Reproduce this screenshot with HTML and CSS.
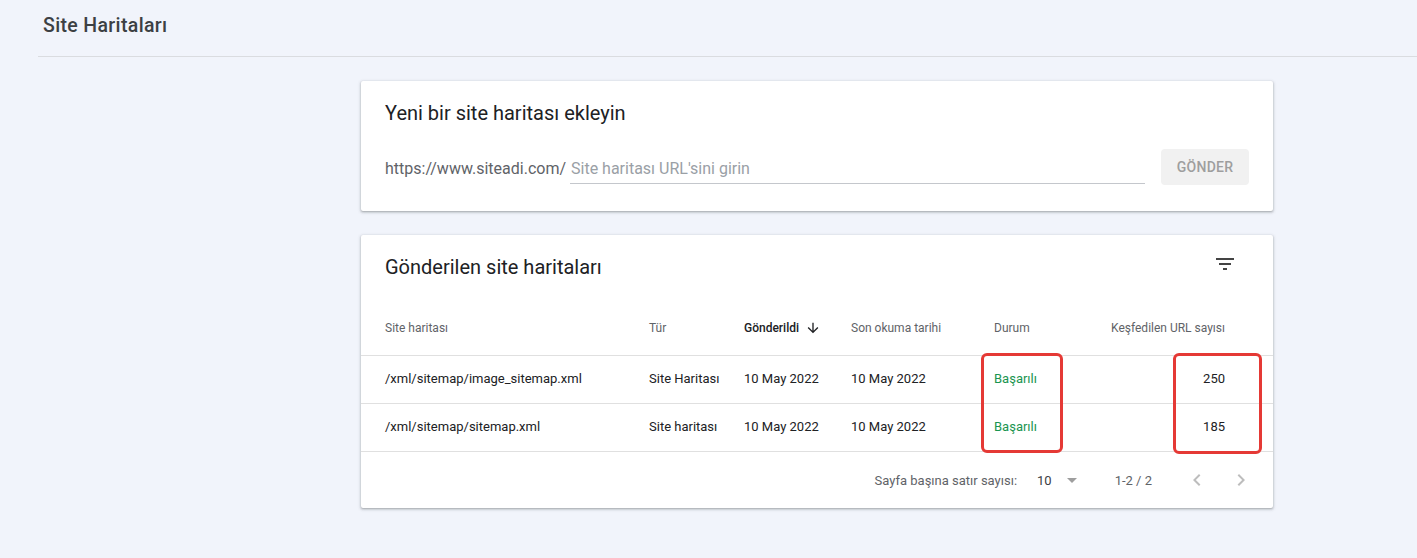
FILE: index.html
```html
<!DOCTYPE html>
<html lang="tr">
<head>
<meta charset="utf-8">
<title>Site Haritaları</title>
<link rel="stylesheet" href="styles.css">
</head>
<body>
<header class="page-header">
  <h1 class="page-title">Site Haritaları</h1>
</header>
<main class="content">
  <section class="card add-card">
    <h2 class="card-title">Yeni bir site haritası ekleyin</h2>
    <div class="add-row">
      <span class="prefix">https://www.siteadi.com/</span>
      <div class="input-wrap"><span class="placeholder">Site haritası URL'sini girin</span></div>
      <button class="submit">GÖNDER</button>
    </div>
  </section>

  <section class="card list-card">
    <div class="list-head">
      <h2 class="card-title">Gönderilen site haritaları</h2>
      <svg class="filter-icon" width="24" height="24" viewBox="0 0 24 24"><path d="M10 18h4v-2h-4v2zM3 6v2h18V6H3zm3 7h12v-2H6v2z" fill="#444"/></svg>
    </div>
    <div class="table">
      <div class="row head-row">
        <div class="cell">Site haritası</div>
        <div class="cell">Tür</div>
        <div class="cell sorted">Gönderildi <svg class="sort-icon" width="16" height="16" viewBox="0 0 24 24"><path d="M20 12l-1.41-1.41L13 16.17V4h-2v12.17l-5.58-5.59L4 12l8 8 8-8z" fill="#202124"/></svg></div>
        <div class="cell">Son okuma tarihi</div>
        <div class="cell">Durum</div>
        <div class="cell num">Keşfedilen URL sayısı</div>
      </div>
      <div class="row body-row">
        <div class="cell">/xml/sitemap/image_sitemap.xml</div>
        <div class="cell">Site Haritası</div>
        <div class="cell">10 May 2022</div>
        <div class="cell">10 May 2022</div>
        <div class="cell ok">Başarılı</div>
        <div class="cell num">250</div>
      </div>
      <div class="row body-row">
        <div class="cell">/xml/sitemap/sitemap.xml</div>
        <div class="cell">Site haritası</div>
        <div class="cell">10 May 2022</div>
        <div class="cell">10 May 2022</div>
        <div class="cell ok">Başarılı</div>
        <div class="cell num">185</div>
      </div>
      <div class="highlight hl-status"></div>
      <div class="highlight hl-count"></div>
    </div>
    <div class="pager">
      <span class="pager-label">Sayfa başına satır sayısı:</span>
      <span class="pager-size">10</span>
      <svg class="pager-drop" width="24" height="24" viewBox="0 0 24 24"><path d="M7 10l5 5 5-5z" fill="#9e9e9e"/></svg>
      <span class="pager-range">1-2 / 2</span>
      <svg class="pager-nav" width="24" height="24" viewBox="0 0 24 24"><path d="M15.41 7.41L14 6l-6 6 6 6 1.41-1.41L10.83 12z" fill="#bdbdbd"/></svg>
      <svg class="pager-nav" width="24" height="24" viewBox="0 0 24 24"><path d="M10 6L8.59 7.41 13.17 12l-4.58 4.59L10 18l6-6z" fill="#bdbdbd"/></svg>
    </div>
  </section>
</main>
</body>
</html>
```
FILE: styles.css
```css
* { box-sizing: border-box; }
html, body { margin: 0; padding: 0; }
body {
  background: #f1f4fb;
  font-family: Roboto, "Liberation Sans", Arial, sans-serif;
  color: #202124;
  width: 1417px;
  height: 558px;
  overflow: hidden;
}
.page-header {
  margin-left: 38px;
  height: 57px;
  border-bottom: 1px solid #dadce0;
  display: flex;
  align-items: center;
  padding-left: 5px;
  padding-bottom: 6px;
}
.page-title {
  margin: 0;
  font-family: Roboto, "Open Sans", sans-serif;
  font-weight: 500;
  font-size: 19.5px;
  color: #3c4043;
  letter-spacing: 0.35px;
}
.content {
  padding: 24px 0 0 361px;
  display: flex;
  flex-direction: column;
  gap: 24px;
}
.card {
  width: 912px;
  background: #fff;
  border-radius: 2px;
  box-shadow: 0 1px 2px rgba(60,64,67,.3), 0 1px 3px 1px rgba(60,64,67,.15);
}
.card-title {
  margin: 0;
  font-size: 20px;
  font-weight: 400;
  line-height: 24px;
  color: #202124;
}
.add-card {
  height: 130px;
  padding: 20px 24px 0 24px;
}
.add-row {
  margin-top: 24px;
  display: flex;
  align-items: center;
  height: 36px;
}
.prefix {
  font-size: 16px;
  color: #5f6368;
  margin-top: 2px;
}
.input-wrap {
  margin-left: 4px;
  width: 576px;
  height: 33px;
  border-bottom: 1px solid #c4c7cc;
  display: flex;
  align-items: center;
  padding-top: 4px;
  padding-left: 1px;
}
.placeholder {
  font-size: 16px;
  color: #9aa0a6;
}
.submit {
  margin-left: 16px;
  width: 88px;
  height: 36px;
  border: 0;
  border-radius: 4px;
  background: #f1f1f1;
  color: #9e9e9e;
  font-family: Roboto, sans-serif;
  font-size: 14px;
  font-weight: 500;
  letter-spacing: 0.25px;
}
.list-card {
  height: 273px;
  position: relative;
}
.list-head {
  display: flex;
  justify-content: space-between;
  align-items: flex-start;
  height: 65px;
  padding: 20px 36px 0 24px;
}
.filter-icon { margin-top: -3px; }
.table { position: relative; }
.row {
  display: grid;
  grid-template-columns: 264px 95px 107px 143px 106px 125px;
  padding-left: 24px;
  align-items: center;
  border-bottom: 1px solid #e0e0e0;
}
.head-row {
  height: 56px;
  font-size: 12px;
  color: #5f6368;
}
.body-row {
  height: 48px;
  font-size: 13px;
  color: #202124;
  padding-bottom: 2px;
}
.cell { white-space: nowrap; }
.sorted {
  color: #202124;
  font-weight: 500;
  display: flex;
  align-items: center;
  gap: 6px;
}
.num { text-align: right; }
.ok { color: #1a9550; }
.highlight {
  position: absolute;
  border: 3px solid #e53935;
  border-radius: 6px;
}
.hl-status { left: 620px; top: 53px; width: 82px; height: 100px; }
.hl-count { left: 812px; top: 53px; width: 89px; height: 101px; }
.pager {
  height: 56px;
  display: flex;
  align-items: center;
  justify-content: flex-end;
  padding-right: 20px;
  font-size: 13px;
  color: #5f6368;
}
.pager-label { margin-right: 20px; }
.pager-size { font-size: 13px; color: #3c4043; margin-right: 8px; }
.pager-drop { margin-right: 31px; }
.pager-range { margin-right: 33px; }
.pager-nav + .pager-nav { margin-left: 20px; }
```
